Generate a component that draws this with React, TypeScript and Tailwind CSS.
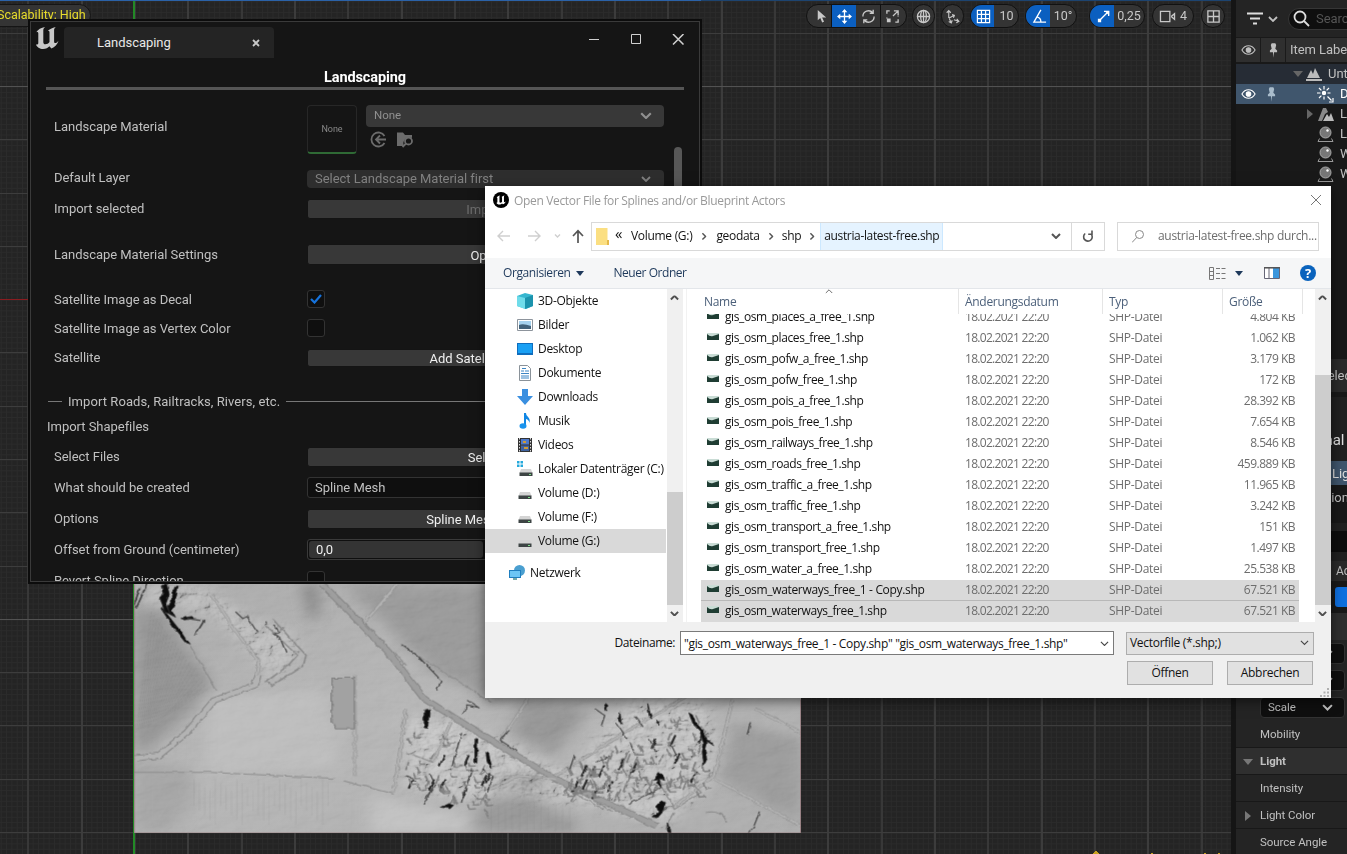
import React from "react";

type Kids = { children?: React.ReactNode };

/* ---------- shared glyphs ---------- */

function Chevron({ w = 12, className = "", sw = 1.8 }: { w?: number; className?: string; sw?: number }) {
  return (
    <svg width={w} height={w * 0.6} viewBox="0 0 10 6" fill="none" stroke="currentColor" strokeWidth={sw} className={`shrink-0 ${className}`}>
      <path d="M1 1l4 4 4-4" />
    </svg>
  );
}

function UnrealMark({ size, color }: { size: number; color: string }) {
  return (
    <svg width={size} height={size} viewBox="0 0 24 24" fill={color}>
      <path d="M1 6.5C3 3.400 6 1.500 10.200.9 8.800 1.900 8.300 2.700 8.300 4.200V16c0 1.500.8 2.300 2 2.300 1.700 0 3.200-1 4.200-2.300V6.300c0-1.200-.7-1.600-1.600-1.200C14.300 3.200 17 1.800 20.800.9c-1.200 1-1.700 1.900-1.700 3.300v11.300c0 1.200.5 1.600 1.200 1.600 1 0 2-.8 3.200-2.300-1 3.600-3.700 6.400-7.100 7.600l-2-2.200C13 21.700 11 23 8 23c-3 0-6.300-2.200-7-4.600 1.500.3 2.300-.2 2.300-1.400V7.600C3.300 6 2.300 5.700 1 6.500z" />
    </svg>
  );
}

/* ---------- viewport ---------- */

function Grid() {
  return (
    <svg className="absolute inset-0" width="1231" height="854" shapeRendering="crispEdges">
      <defs>
        <pattern id="minor" width="5.33" height="5.33" x="134" y="33.3" patternUnits="userSpaceOnUse">
          <path d="M0 .5H6M.5 0V6" stroke="#2b2b2b" strokeWidth="1" fill="none" />
        </pattern>
      </defs>
      <rect width="1231" height="854" fill="#242424" />
      <rect width="1231" height="854" fill="url(#minor)" />
      {Array.from({ length: 23 }, (_, i) => (
        <rect key={i} x={Math.round(27.3 + i * 53.33)} y="0" width="1.600" height="854" fill={i % 2 ? "#3c3c3c" : "#383838"} />
      ))}
      {Array.from({ length: 16 }, (_, i) => (
        <rect key={i} x="0" y={Math.round(32.8 + i * 53.28)} width="1231" height="1" fill={i % 10 === 1 ? "#525252" : "#3d3d3d"} />
      ))}
      <rect x="0" y="299" width="485" height="1" fill="#8a1c20" />
      <rect x="133" y="0" width="2" height="854" fill="#228a26" />
      <rect x="0" y="0" width="701" height="1" fill="#2b62a8" />
      <rect x="701" y="0" width="530" height="1" fill="#1d4470" />
      <path d="M1093 854l3-4 3 4zM1151 853h2v1h-2zM1204 853h2v1h-2zM1218 853h2v1h-2z" fill="#c9a21f" />
    </svg>
  );
}

const DARK_MARKS = [
  "M104 27l6 30-8 30 10 30-12-6-6-24-4-14 8-20-4-26zM122 36l8 0-6 40-8 30 8 20-12-8-6-24 10-26z",
  "M92 96l16 26 26 44 20 40-8-4-24-40-30-60z",
  "M136 130l24-6 6 6-20 4z",
  "M680 404l12-4-4 58-8-2z",
  "M794 488l6 2-2 72-5 0z",
  "M818 530l6 2 8 46-10-14z",
  "M1272 412l8 6 6 20 14 22 8 22 20 28-14-12-4 24 4 24-8 22-4-40 4-26-10-36-14-20z",
  "M1206 590l8 10 4 14-12-6 2 28-8-14 4-10-12 2z",
  "M1210 676l10 4-4 20-16 26-8-4 12-14-4-16z",
  "M1224 740l6 30h-6z",
  "M1086 384l5 6-3 16-4-8zM1118 408l3 38-6-14zM1180 384l9 46-6-10zM1200 430l5 8-2 12z",
  "M738 684l8 4-8 10-20-4zM772 656l4-16-14 38z",
];

const THIN_MARKS = [
  "M258 110l16 20 10-6 22 46M324 150l6-8M345 150l10 18-12 8 16 16 12 40",
  "M632 208l34 34 54 76-12 24M766 418l12-30 22 8M776 374l30 26M742 572l22-100M764 680l22-98",
  "M850 494l40 34M850 494l18-30M1410 440l-8 36M1430 710l-14 46-12 14",
  "M1062 400l22 20-8 32M1110 440l24 50M1150 420l20 34M1184 490l14 38M1230 500l16 44M1140 500l10 30M1208 636l-70 50",
  "M1064 560l30-20M1016 540l-10 40M700 640l-20 46M694 596l10 30-20 40M640 600l20 14M810 580l24 20-10 50",
];

const ROADS = [
  "M452 27L600 230 680 370 800 470 975 610 1200 750",
  "M31 548L86 540 150 470 210 375 300 330 310 300",
  "M975 600L1130 470 1270 360M1370 372L1330 600 1240 690M1330 610L1523 750",
  "M620 27L548 140M912 372L850 494M1420 400L1523 470",
  "M206 60L260 170 310 260 304 310",
  "M525 300V600M612 650L640 400M700 560L740 440M975 610L890 600 830 640",
];

const noise = (n: number) => {
  const v = Math.sin(n * 12.9898) * 43758.5453;
  return v - Math.floor(v);
};

/* buildings and hedges: short strokes spread over the settled areas */
const HOUSES = Array.from({ length: 190 }, (_, i) => {
  const a = noise(i + 1);
  const b = noise(i + 301);
  const c = noise(i + 701);
  const east = i % 4 !== 0;
  const x = east ? 1000 + a * 310 : 640 + a * 190;
  const y = east ? 380 + (1 - a) * 190 + b * (90 + a * 180) : 440 + a * 80 + b * 190;
  const slant = c > 0.6 ? -14 : 10;
  return { d: `M${x} ${y}l${slant * c + 2} ${8 + c * 26}l${c < 0.4 ? 14 : 2} ${-6 * c}`, dark: c > 0.86 };
});

function Terrain() {
  return (
    <svg className="absolute left-[134px] top-[584px]" width="667" height="249" viewBox="31 27 1492 744" preserveAspectRatio="none">
      <defs>
        <linearGradient id="tb" x1="0" y1="0" x2="1" y2="1">
          <stop offset="0" stopColor="#a2a2a2" />
          <stop offset=".45" stopColor="#aeaeae" />
          <stop offset="1" stopColor="#a4a4a4" />
        </linearGradient>
        <filter id="fine" x="0" y="0" width="100%" height="100%">
          <feTurbulence type="fractalNoise" baseFrequency=".012 .02" numOctaves="5" seed="7" />
          <feDiffuseLighting lightingColor="#fff" surfaceScale="7" diffuseConstant="1">
            <feDistantLight azimuth="215" elevation="45" />
          </feDiffuseLighting>
        </filter>
        <filter id="rough" x="0" y="0" width="100%" height="100%">
          <feTurbulence type="fractalNoise" baseFrequency=".025 .035" numOctaves="5" seed="21" />
          <feDiffuseLighting lightingColor="#fff" surfaceScale="14" diffuseConstant=".9">
            <feDistantLight azimuth="215" elevation="42" />
          </feDiffuseLighting>
        </filter>
        <filter id="jag" x="-5%" y="-5%" width="110%" height="110%">
          <feTurbulence type="fractalNoise" baseFrequency=".05" numOctaves="3" seed="3" />
          <feDisplacementMap in="SourceGraphic" scale="9" xChannelSelector="R" yChannelSelector="G" />
          <feGaussianBlur stdDeviation="1" />
        </filter>
        <filter id="soft" x="-30%" y="-30%" width="160%" height="160%">
          <feGaussianBlur stdDeviation="18" />
        </filter>
        <mask id="village">
          <g filter="url(#soft)" fill="#fff">
            <path d="M640 420L760 440 1000 590 1090 450 1150 372H1300L1340 500 1310 640 1220 750 1060 690 830 650 800 680 640 640z" />
            <path d="M31 27H190L300 140 370 150 410 230 340 320 270 200 180 110 90 90 31 70z" opacity=".8" />
          </g>
        </mask>
      </defs>
      <rect x="31" y="27" width="1492" height="744" fill="url(#tb)" />
      <g filter="url(#soft)">
        <path d="M31 110L90 100 210 330 140 430 60 530 31 530z" fill="#8a8a8a" />
        <path d="M500 27H830V372L700 290z" fill="#909090" />
        <path d="M410 27h30v100l-14 10z" fill="#6a6a6a" />
        <path d="M350 440q60-40 90 0-20 90-60 90z" fill="#9a9a9a" />
        <path d="M900 380l150 20-80 140-100-70z" fill="#8c8c8c" />
        <path d="M800 690l100-40 130 100-10 21H790z" fill="#8e8e8e" />
        <path d="M1370 440l153 50v250l-180-130z" fill="#929292" />
        <path d="M190 360l270-20 30 240-300 10z" fill="#b6b6b6" />
        <path d="M560 660l220 60v51H560z" fill="#bbb" />
        <path d="M840 590l130 10-20 50-100-10z" fill="#858585" />
        <path d="M31 556l120 20 20 80-60 115H31z" fill="#9c9c9c" />
      </g>
      <rect x="31" y="27" width="1492" height="744" filter="url(#fine)" opacity=".35" style={{ mixBlendMode: "soft-light" }} />
      <g mask="url(#village)" opacity=".34" style={{ mixBlendMode: "hard-light" }}>
        <rect x="31" y="27" width="1492" height="744" filter="url(#rough)" />
      </g>
      <g stroke="#868686" strokeWidth="2" opacity=".4">
        {Array.from({ length: 22 }, (_, i) => (
          <path key={i} d={`M${70 + i * 6} ${110 + i * 11}L${36 + i * 4} ${470 - i * 3}`} strokeDasharray="7 5" />
        ))}
        {Array.from({ length: 26 }, (_, i) => (
          <path key={i} d={`M${165 + i * 12} ${610 + (i % 4) * 12}V${690 + (i % 5) * 14}`} opacity=".5" />
        ))}
        {Array.from({ length: 12 }, (_, i) => (
          <path key={i} d={`M${830 + i * 16} ${680 + (i % 3) * 6}V765`} opacity=".5" />
        ))}
      </g>
      <g fill="none" filter="url(#jag)">
        {ROADS.map((d, i) => (
          <path key={i} d={d} stroke={i < 2 ? "#868686" : "#919191"} strokeWidth={i < 2 ? 18 : 8} />
        ))}
        {ROADS.map((d, i) => (
          <path key={i} d={d} stroke={i === 0 ? "#9e9e9e" : "#b3b3b3"} strokeWidth={i < 2 ? 13 : 5} />
        ))}
        <path d="M474 308H524V460H482L474 440z" fill="#a2a2a2" stroke="#808080" strokeWidth="3" />
        <path d="M340 130l76 110-6 30-70 60-14-10 50-50 20-30-70-90" stroke="#8a8a8a" strokeWidth="4" />
        <path d="M154 206L216 345M630 210L830 380M614 232L640 270M31 590L200 590 480 608M612 655L500 615M640 530L700 560" stroke="#8e8e8e" strokeWidth="3" />
        <path d="M1210 630l50-30 40 50-60 50zM1040 660l60 46M1000 640l80 60M1310 710q40-10 46 30M1240 710l-20 50" stroke="#8a8a8a" strokeWidth="3" />
        {HOUSES.map((h, i) => (
          <path key={i} d={h.d} stroke={h.dark ? "#2c2c2c" : "#7f7f7f"} strokeWidth={h.dark ? 5 : 4} />
        ))}
      </g>
      <g filter="url(#jag)">
        {DARK_MARKS.map((d, i) => (
          <path key={i} d={d} fill="#101010" stroke="#222" strokeWidth="2" />
        ))}
        {THIN_MARKS.map((d, i) => (
          <path key={i} d={d} fill="none" stroke="#484848" strokeWidth="3" />
        ))}
        <path d="M31 90L44 40M36 100L60 27M150 130l30 6M168 180l20-44" stroke="#444" strokeWidth="4" fill="none" />
      </g>
      <path d="M31 27V771H1523V372" fill="none" stroke="#8d6468" strokeWidth="2.500" />
    </svg>
  );
}

function Pill({ className = "", children }: Kids & { className?: string }) {
  return (
    <div className={`flex h-6 shrink-0 items-center overflow-hidden rounded-full border border-[#111] bg-[#343434] text-[#c8c8c8] ${className}`}>
      {children}
    </div>
  );
}

function Cell({ active, className = "", children }: Kids & { active?: boolean; className?: string }) {
  return (
    <div className={`flex h-full shrink-0 items-center justify-center ${active ? "bg-[#0b5fc0] text-white" : ""} ${className}`}>{children}</div>
  );
}

function ViewportToolbar() {
  const s = { width: 15, height: 15, viewBox: "0 0 16 16", fill: "none", stroke: "currentColor", strokeWidth: 1.4 };
  return (
    <div className="absolute left-[806px] top-[4px] flex items-center text-[12.500px]">
      <Pill className="w-[101px]">
        <Cell className="w-[25px] border-r border-[#111] pl-1">
          <svg {...s}>
            <path d="M4 1v11l2.700-2.500 2 5 2-1-2-4.500H13z" fill="currentColor" stroke="none" />
          </svg>
        </Cell>
        <Cell active className="w-6">
          <svg {...s}>
            <path d="M8 1.500v13M1.500 8h13" />
            <path d="M8 0l3 3.500H5zM8 16l3-3.500H5zM0 8l3.500-3v6zM16 8l-3.500-3v6z" fill="currentColor" stroke="none" />
          </svg>
        </Cell>
        <Cell className="w-[25px] border-r border-[#111]">
          <svg {...s}>
            <path d="M2 8a6 6 0 0 1 10.500-4M14 8A6 6 0 0 1 3.500 12M13 .8V4.500H9.300M3 15.200V11.500h3.700" />
          </svg>
        </Cell>
        <Cell className="w-[23px]">
          <svg {...s}>
            <path d="M2 5V2h3M2 9v1M14 7v1M11 14h3v-3M8.500 7.500L13.500 2.500M9.500 2H14v4.500" />
            <path d="M2 10h4v4H2z" fill="currentColor" stroke="none" />
          </svg>
        </Cell>
      </Pill>
      <Pill className="ml-[5px] w-[23px] justify-center">
        <svg {...s}>
          <circle cx="8" cy="8" r="6.500" />
          <ellipse cx="8" cy="8" rx="3" ry="6.500" />
          <path d="M1.500 8h13M8 1.500v13" />
        </svg>
      </Pill>
      <Pill className="ml-[6px] w-[23px] justify-center">
        <svg {...s} strokeWidth={1.2}>
          <path d="M4 9.500V2M1.800 4L4 1.600 6.200 4M4.500 9.500l5-2.500M7.500 6l2.500.8L9 9.300M4.500 10l2 4.500M4 13.300l2.700 1.500 1-2.800M9.500 11.500l5 1.500M12.500 10.500l2.300 2.600-2.800 1.700" />
        </svg>
      </Pill>
      <Pill className="ml-[6px] w-[49px]">
        <Cell active className="w-[23px] pl-0.5">
          <svg {...s} strokeWidth={1.3}>
            <path d="M1.500 1.500h13v13h-13zM5.800 1.500v13M10.200 1.500v13M1.500 5.800h13M1.500 10.200h13" />
          </svg>
        </Cell>
        <Cell className="w-[25px]">10</Cell>
      </Pill>
      <Pill className="ml-[6px] w-[52px]">
        <Cell active className="w-[24px] pl-0.5">
          <svg {...s}>
            <path d="M9.500 1L2 14h13M5 8.500c3 .5 4.500 2.500 4.500 5.500" />
          </svg>
        </Cell>
        <Cell className="w-[26px]">10°</Cell>
      </Pill>
      <Pill className="ml-[12px] w-[56px]">
        <Cell active className="w-[24px] pl-0.5">
          <svg {...s}>
            <path d="M5 11l8-8M8.500 2.500h5v5" />
            <path d="M2 10.500h3.500V14H2z" fill="currentColor" stroke="none" />
            <path d="M9 2h5v5z" fill="currentColor" stroke="none" />
          </svg>
        </Cell>
        <Cell className="w-[30px]">0,25</Cell>
      </Pill>
      <Pill className="ml-[7px] w-[42px] gap-1 pl-[6px]">
        <svg {...s} width="17">
          <path d="M.5 2.500h10v11H.5zM12.500 7.500l3-2.500v6l-3-2.500z" />
        </svg>
        4
      </Pill>
      <Pill className="ml-[7px] w-[24px] justify-center">
        <svg {...s}>
          <path d="M2 2h12v12H2zM8 2v12M2 8h12" />
        </svg>
      </Pill>
    </div>
  );
}

/* ---------- right hand panels ---------- */

function Eye() {
  return (
    <svg className="shrink-0" width="15" height="12" viewBox="0 0 16 12" fill="none" stroke="currentColor" strokeWidth="1.200">
      <path d="M1 6c3.500-6 10.500-6 14 0-3.500 6-10.500 6-14 0z" />
      <circle cx="8" cy="6" r="2.400" fill="currentColor" />
    </svg>
  );
}

function Pin() {
  return (
    <svg className="shrink-0" width="9" height="15" viewBox="0 0 10 16" fill="currentColor">
      <path d="M3 0h4l1 2-1 4 2 2v2H5.600L5 16l-.6-6H1V8l2-2-1-4z" />
    </svg>
  );
}

function Sphere() {
  return (
    <svg className="shrink-0" width="17" height="17" viewBox="0 0 16 17" fill="none">
      <circle cx="8" cy="6.500" r="5.500" fill="#777" stroke="#aaa" />
      <circle cx="10" cy="4.500" r="1.200" fill="#fff" />
      <path d="M2 12.500L.5 15.500h15L14 12.500" stroke="#999" />
    </svg>
  );
}

function OutlinerRow({ indent, icon, label, className = "", marks }: { indent: string; icon: React.ReactNode; label: string; className?: string; marks?: boolean }) {
  return (
    <div className={`flex h-5 shrink-0 items-center whitespace-nowrap ${className}`}>
      <div className={`flex shrink-0 items-center gap-[11px] pl-[5px] ${indent}`}>
        {marks && (
          <>
            <Eye />
            <span className="text-[#a9bccb]"><Pin /></span>
          </>
        )}
      </div>
      {icon}
      <span className="-mt-px ml-[6px] shrink-0">{label}</span>
    </div>
  );
}

function DetailRow({ label, arrow, head }: { label: string; arrow?: "down" | "right"; head?: boolean }) {
  return (
    <div className={`flex h-[27px] shrink-0 items-center whitespace-nowrap border-b border-[#181818] pt-px text-[11.500px] ${head ? "bg-[#2f2f2f] font-bold" : "bg-[#242424]"}`}>
      <span className="flex w-6 justify-center text-[#777]">
        {arrow === "down" && <svg width="10" height="6" viewBox="0 0 10 6" fill="currentColor"><path d="M0 0h10L5 6z" /></svg>}
        {arrow === "right" && <svg width="6" height="10" viewBox="0 0 6 10" fill="currentColor"><path d="M0 0v10l6-5z" /></svg>}
      </span>
      {label}
    </div>
  );
}

function Combo({ label }: { label?: string }) {
  return (
    <div className="mb-[6px] ml-[24px] flex h-[21px] w-[85px] shrink-0 items-center rounded border border-[#333] bg-[#0f0f0f] pl-[7px] pr-[11px] text-[11.500px]">
      {label}
      <Chevron w={11} className="ml-auto" />
    </div>
  );
}

function RightPanel() {
  return (
    <div className="flex w-[116px] shrink-0 flex-col overflow-hidden border-l-[5px] border-[#151515] bg-[#191919] text-[13px] tracking-[-0.05px] text-[#c0c0c0]">
      <div className="flex h-[37px] shrink-0 items-center bg-[#242424] pl-[11px]">
        <svg className="shrink-0" width="16" height="13" viewBox="0 0 16 13" stroke="#ddd" strokeWidth="2"><path d="M0 1.500h16M3 6.500h10M6 11.500h4" /></svg>
        <Chevron w={10} className="ml-[5px]" />
        <div className="ml-[10px] flex h-[22px] w-[80px] shrink-0 items-center rounded-full border border-[#363636] bg-[#0f0f0f] pl-[4px] text-[#555]">
          <svg className="shrink-0" width="17" height="17" viewBox="0 0 17 17" fill="none" stroke="#ddd" strokeWidth="1.800"><circle cx="7" cy="7" r="5.500" /><path d="M11 11l5 5" /></svg>
          <span className="-mt-px ml-[6px]">Search...</span>
        </div>
      </div>
      <div className="mb-[2px] mt-px flex h-[24px] shrink-0 items-center whitespace-nowrap bg-[#2f2f2f]">
        <span className="flex h-full w-[25px] shrink-0 items-center justify-center border-r border-[#1a1a1a]"><Eye /></span>
        <span className="flex h-full w-[25px] shrink-0 items-center justify-center border-r border-[#1a1a1a]"><Pin /></span>
        <span className="-mt-px pl-[4px]">Item Label</span>
      </div>
      <OutlinerRow
        indent="w-[57px]" className="bg-[#262c35]" label="Untitled"
        icon={
          <svg className="shrink-0" width="29" height="14" viewBox="0 0 29 14" fill="#bbb">
            <path d="M0 4h10L5 10z" fill="#666" />
            <path d="M14 11l4-8 2 4 2-6 5 10zM13 12h16v2H13z" />
          </svg>
        }
      />
      <OutlinerRow
        indent="w-[81px]" marks className="bg-[#40566d] text-white" label="DirectionalLight"
        icon={
          <svg className="shrink-0" width="17" height="17" viewBox="0 0 17 17" stroke="#fff" strokeWidth="1.200" fill="#fff">
            <circle cx="7" cy="7" r="1.600" />
            <path d="M7 0v3.500M7 10.500v3M0 7h3.500M10.500 7h3M2 2l2.400 2.400M12 2L9.600 4.400M2 12l2.400-2.400" />
            <path d="M10.500 10.500l4 4M16 12v4h-4" fill="none" />
          </svg>
        }
      />
      <OutlinerRow
        indent="w-[71px]" label="Landscape"
        icon={
          <svg className="shrink-0" width="27" height="15" viewBox="0 0 27 15" fill="#bbb">
            <path d="M0 2v10l6-5z" fill="#666" />
            <path d="M11 14L16 1h3l2 4-3 2-3 7z" fill="#888" />
            <path d="M16 14l4-7 2 3 2-4 3 8z" />
          </svg>
        }
      />
      <OutlinerRow indent="w-[81px]" label="LandscapingInfo" icon={<Sphere />} />
      <OutlinerRow indent="w-[81px]" label="WorldDataLayers" icon={<Sphere />} />
      <OutlinerRow indent="w-[81px]" label="WorldPartition" icon={<Sphere />} />
      <div className="mt-[175px] flex h-[33px] shrink-0 items-center bg-[#2a2a2a] pl-[84px]">Selec</div>
      <div className="mt-[5px] flex h-[64px] shrink-0 items-end bg-[#212121] pb-[13px] pl-[80px] text-[15px] text-[#e0e0e0]">onal</div>
      <div className="flex h-[24px] shrink-0 items-center bg-[#40566d] pl-[96px] text-[#e0e0e0]">Lig</div>
      <div className="flex h-[24px] shrink-0 items-center pl-[91px]">tion</div>
      <div className="mt-[14px] h-[8px] shrink-0 bg-[#212121]" />
      <div className="h-[21px] shrink-0 bg-[#0d0d0d]" />
      <div className="h-[9px] shrink-0 bg-[#212121]" />
      <div className="flex h-[20px] shrink-0 items-center bg-[#2a2a2a] pl-[100px] text-[12px]">Ac</div>
      <div className="flex h-[32px] shrink-0 items-center bg-[#191919] pl-[99px]">
        <div className="h-[20px] w-[30px] shrink-0 rounded-[3px] bg-[#0f70e0]" />
      </div>
      <div className="h-[27px] shrink-0 bg-[#2f2f2f]" />
      <div className="flex h-[81px] shrink-0 flex-col bg-[#242424] pt-[3px]">
        <Combo />
        <Combo />
        <Combo label="Scale" />
      </div>
      <DetailRow label="Mobility" />
      <DetailRow label="Light" arrow="down" head />
      <DetailRow label="Intensity" />
      <DetailRow label="Light Color" arrow="right" />
      <DetailRow label="Source Angle" />
    </div>
  );
}

/* ---------- Landscaping window ---------- */

function Row({ label, h, children }: Kids & { label: string; h: string }) {
  return (
    <div className={`flex shrink-0 items-center ${h}`}>
      <div className="w-[253px] shrink-0 whitespace-nowrap">{label}</div>
      {children}
    </div>
  );
}

function Btn({ label, h, dim }: { label: string; h: string; dim?: boolean }) {
  return (
    <div className={`flex w-[357px] items-center justify-center rounded-[3px] border border-[#141414] bg-[#383838] pt-[2px] ${h} ${dim ? "text-[#6e6e6e]" : "text-[#f0f0f0]"}`}>
      {label}
    </div>
  );
}

function Check({ on }: { on?: boolean }) {
  return (
    <div className="-mt-px flex h-[18px] w-[18px] items-center justify-center rounded-[3px] border border-[#333] bg-[#0f0f0f]">
      {on && <svg width="12" height="10" viewBox="0 0 12 10" fill="none" stroke="#1673dc" strokeWidth="2.200"><path d="M1 5l3.500 3.500L11 1" /></svg>}
    </div>
  );
}

function LandscapingWindow() {
  return (
    <div className="absolute left-[28px] top-[19px] h-[565px] w-[674px] border-2 border-[#0c0c0c] bg-[#151515] text-[13px] tracking-[-0.03px] text-[#c0c0c0]">
      <div className="flex h-full flex-col border border-[#3a3a3a]">
        <div className="flex h-[36px] shrink-0 items-start">
          <div className="ml-[4px] mt-[4px]"><UnrealMark size={24} color="#c8c8c8" /></div>
          <div className="ml-[5px] mt-[5px] flex h-[31px] w-[210px] items-center justify-between rounded-t bg-[#242424] pl-[33px] pr-[14px] text-[#e8e8e8]">
            Landscaping
            <svg width="8" height="8" viewBox="0 0 8 8" stroke="#c8c8c8" strokeWidth="1.800"><path d="M1 1l6 6M7 1L1 7" /></svg>
          </div>
          <svg className="ml-[315px] mt-[12px]" width="96" height="11" viewBox="0 0 96 11" fill="none" stroke="#d0d0d0">
            <path d="M0 5.500h10" />
            <path d="M42.500.5h9v9h-9z" />
            <path d="M84 0l10.500 10.500M94.500 0L84 10.500" strokeWidth="1.500" />
          </svg>
        </div>
        <div className="flex h-[29px] shrink-0 items-end justify-center pb-[2px] text-[14.500px] font-bold tracking-[-0.1px] text-white">Landscaping</div>
        <div className="ml-[15px] h-[3px] w-[638px] shrink-0 bg-[#555]" />
        <div className="flex min-h-0 flex-1 overflow-hidden">
          <div className="flex w-[640px] shrink-0 flex-col pl-[23px]">
            <div className="flex h-[72px] shrink-0">
              <div className="flex w-[253px] shrink-0 items-center">Landscape Material</div>
              <div className="mt-[15px] flex h-[49px] w-[50px] items-center justify-center rounded-sm border border-b-2 border-[#272727] border-b-[#2f6a35] text-[9px] text-[#888]">None</div>
              <div className="ml-[9px] mt-[15px]">
                <div className="flex h-[22px] w-[298px] items-center justify-between rounded bg-[#383838] pb-px pl-[8px] pr-[12px] text-[11.500px] text-[#909090]">
                  None
                  <Chevron w={12} />
                </div>
                <svg className="ml-[4px] mt-[4px]" width="44" height="17" viewBox="0 0 44 17" fill="none" stroke="#6c6c6c" strokeWidth="1.800">
                  <path d="M14.500 5A7 7 0 1 0 14.500 12M16 8.500H6M10 4.500l-4 4 4 4" />
                  <path d="M27 1.500h6l2 2.500h7v3a6 6 0 0 0-8 8H27z" fill="#6c6c6c" stroke="none" />
                  <circle cx="38.500" cy="10" r="3.500" fill="#151515" />
                  <path d="M36 12.500L32.500 16" />
                </svg>
              </div>
            </div>
            <Row label="Default Layer" h="h-[31px]">
              <div className="mt-[2px] flex h-[18px] w-[357px] items-center justify-between rounded bg-[#2e2e2e] pl-[8px] pr-[13px] text-[#808080]">
                Select Landscape Material first
                <Chevron w={10} />
              </div>
            </Row>
            <Row label="Import selected" h="h-[31px]"><Btn label="Import" h="h-[20px]" dim /></Row>
            <div className="h-[15px] shrink-0" />
            <Row label="Landscape Material Settings" h="h-[30px]"><Btn label="Open" h="h-[21px]" /></Row>
            <div className="h-[16px] shrink-0" />
            <Row label="Satellite Image as Decal" h="h-[29px]"><Check on /></Row>
            <Row label="Satellite Image as Vertex Color" h="h-[29px]"><Check /></Row>
            <Row label="Satellite" h="h-[29px]"><Btn label="Add Satellite Image" h="h-[18px]" /></Row>
            <div className="h-[19px] shrink-0" />
            <div className="-ml-[6px] flex h-[20px] shrink-0 items-center gap-[6px] whitespace-nowrap">
              <div className="h-px w-[14px] bg-[#777]" />
              <span className="tracking-[0.07px]">Import Roads, Railtracks, Rivers, etc.</span>
              <div className="h-px flex-1 bg-[#777]" />
            </div>
            <div className="-ml-[7px] flex h-[30px] shrink-0 items-center">Import Shapefiles</div>
            <Row label="Select Files" h="h-[31px]"><Btn label="Select" h="h-[20px]" /></Row>
            <Row label="What should be created" h="h-[31px]">
              <div className="flex h-[21px] w-[357px] items-center rounded-[3px] border border-[#333] bg-[#0f0f0f] pl-[7px]">Spline Mesh</div>
            </Row>
            <Row label="Options" h="h-[31px]"><Btn label="Spline Mesh Options" h="h-[20px]" /></Row>
            <Row label="Offset from Ground (centimeter)" h="h-[31px]">
              <div className="flex h-[21px] w-[357px] items-center rounded-[3px] border border-[#3a3a3a] bg-[#0f0f0f] p-px">
                <div className="flex h-full w-[174px] items-center rounded-[3px] bg-[#343434] pl-[7px] text-[#f0f0f0]">0,0</div>
              </div>
            </Row>
            <Row label="Revert Spline Direction" h="h-[31px]"><Check /></Row>
          </div>
          <div className="ml-[3px] mt-[57px] h-[180px] w-[8px] rounded-full bg-[#575757]" />
        </div>
      </div>
    </div>
  );
}

/* ---------- file dialog ---------- */

const FILES: [string, string][] = [
  ["gis_osm_places_a_free_1.shp", "4.804 KB"],
  ["gis_osm_places_free_1.shp", "1.062 KB"],
  ["gis_osm_pofw_a_free_1.shp", "3.179 KB"],
  ["gis_osm_pofw_free_1.shp", "172 KB"],
  ["gis_osm_pois_a_free_1.shp", "28.392 KB"],
  ["gis_osm_pois_free_1.shp", "7.654 KB"],
  ["gis_osm_railways_free_1.shp", "8.546 KB"],
  ["gis_osm_roads_free_1.shp", "459.889 KB"],
  ["gis_osm_traffic_a_free_1.shp", "11.965 KB"],
  ["gis_osm_traffic_free_1.shp", "3.242 KB"],
  ["gis_osm_transport_a_free_1.shp", "151 KB"],
  ["gis_osm_transport_free_1.shp", "1.497 KB"],
  ["gis_osm_water_a_free_1.shp", "25.538 KB"],
  ["gis_osm_waterways_free_1 - Copy.shp", "67.521 KB"],
  ["gis_osm_waterways_free_1.shp", "67.521 KB"],
];

const drive = (
  <>
    <path d="M3 7h10l1.500 4h-13z" fill="#d4d4d4" />
    <path d="M1.500 10.500h13v3.500h-13z" fill="#3d4444" />
    <path d="M11 12h2v1h-2z" fill="#7fe08a" />
  </>
);

const PLACES: [string, React.ReactNode][] = [
  ["3D-Objekte", <><path d="M0 3l8-3 8 2v11l-7 3-9-3z" fill="#35b6cf" /><path d="M0 3l8 2v11l-8-3z" fill="#6fdcea" /><path d="M8 5l8-3v11l-8 3z" fill="#1b93ad" /></>],
  ["Bilder", <><path d="M.5 2.500h15v11H.5z" fill="#fff" stroke="#8d949c" /><path d="M2 4h12v8H2z" fill="#a6d2ee" /><path d="M2 8q4-2 12 1v3H2z" fill="#42627a" /></>],
  ["Desktop", <><path d="M0 2h16v12H0z" fill="#0f6dbd" /><path d="M1 3h14v9H1z" fill="#19a0f4" /></>],
  ["Dokumente", <><path d="M2.500.5h8l3 3v12h-11z" fill="#fff" stroke="#8a9299" /><path d="M4 6h3M8 6h4M4 8.500h8M4 11h8M4 13h8M5 3.500h4" stroke="#3c86c4" /></>],
  ["Downloads", <path d="M5 0h6v7h5l-8 9-8-9h5z" fill="#3a8fe0" />],
  ["Musik", <><path d="M7 0h2c0 4 5 4 3.500 10-.3-2-1.500-3.500-3.500-4v7H7z" fill="#0f86e4" /><ellipse cx="6" cy="13" rx="3.500" ry="2.800" fill="#1a94ee" /></>],
  ["Videos", <><path d="M1 1h14v14H1z" fill="#333" /><path d="M4 2h8v5.500H4z" fill="#4f79c8" /><path d="M4 8.500h8V14H4z" fill="#40639f" /><path d="M6 4h3v2H6zM7 10h4v2H7z" fill="#d09a35" /><path d="M2.500 1v14M13.500 1v14" stroke="#ddd" strokeDasharray="1.500 1.500" /></>],
  ["Lokaler Datenträger (C:)", <><g transform="translate(1 1)">{drive}</g><path d="M0 0h2.500v2.500H0zM3.500 0H6v2.500H3.500zM0 3.500h2.500V6H0zM3.500 3.500H6V6H3.500z" fill="#25a9dc" /></>],
  ["Volume (D:)", drive],
  ["Volume (F:)", drive],
  ["Volume (G:)", drive],
];

function ScrollColumn({ thumb }: { thumb: string }) {
  return (
    <div className="flex w-[16px] shrink-0 flex-col bg-[#f0f0f0] text-[#505050]">
      <div className="flex h-[17px] items-center justify-center pr-px"><Chevron w={9} sw={2.200} className="rotate-180" /></div>
      <div className={`w-full bg-[#cdcdcd] ${thumb}`} />
      <div className="flex h-[17px] items-center justify-center pr-px"><Chevron w={9} sw={2.200} /></div>
    </div>
  );
}

function FileDialog() {
  return (
    <div className="absolute left-[485px] top-[186px] flex h-[512px] w-[846px] flex-col whitespace-nowrap bg-white font-['Open_Sans','Noto_Sans',sans-serif] text-[12px] tracking-[-0.3px] text-[#111] shadow-[0_3px_12px_rgba(0,0,0,0.55)]">
      <div className="flex h-[35px] shrink-0 items-start pl-[8px] pr-[9px] pt-[6px]">
        <div className="flex h-4 w-4 items-center justify-center rounded-full bg-black"><UnrealMark size={10} color="#fff" /></div>
        <span className="ml-[5px] mt-[3px] tracking-[-0.34px] text-[#999]">Open Vector File for Splines and/or Blueprint Actors</span>
        <svg className="ml-auto mt-[2px]" width="12" height="12" viewBox="0 0 12 12" stroke="#777"><path d="M1 1l10 10M11 1L1 11" /></svg>
      </div>
      <div className="flex h-[30px] shrink-0 items-center">
        <svg className="ml-[12px] shrink-0" width="88" height="14" viewBox="0 0 88 14" fill="none" stroke="#cfcfcf" strokeWidth="1.400">
          <path d="M13 7H1M6 2L1 7l5 5M31 7h12M38 2l5 5-5 5" />
          <path d="M58 5.500l2.500 2.500L63 5.500" />
          <path d="M81 14V2M76 7l5-5.300L86 7" stroke="#555" strokeWidth="1.700" />
        </svg>
        <div className="ml-[6px] flex h-[29px] w-[514px] shrink-0 items-center border border-[#d9d9d9]">
          <svg className="ml-[4px] mr-[6px] shrink-0" width="13" height="17" viewBox="0 0 13 17"><path d="M0 0h11.500v12H13v5H0z" fill="#fbdf82" /><path d="M11 12h2v5h-2z" fill="#e5b94b" /></svg>
          <span className="-mt-[5px] w-[16px] shrink-0 text-[15px]">«</span>
          Volume (G:)
          <Chevron w={8} className="mx-[8px] -rotate-90 text-[#555]" />
          geodata
          <Chevron w={8} className="ml-[7px] mr-[7px] -rotate-90 text-[#555]" />
          shp
          <Chevron w={8} className="ml-[7px] mr-[4px] -rotate-90 text-[#555]" />
          <div className="flex h-full w-[123px] shrink-0 items-center justify-center border border-y-0 border-[#cce8ff] bg-[#e5f3ff] tracking-[-0.35px]">austria-latest-free.shp</div>
          <Chevron w={10} sw={2} className="ml-auto mr-[10px] text-[#555]" />
          <div className="flex h-full w-[33px] shrink-0 items-center justify-center border-l border-[#d9d9d9]">
            <svg width="12" height="13" viewBox="0 0 12 13" fill="none" stroke="#555" strokeWidth="1.600"><path d="M3.200 3.500A4.300 4.300 0 1 0 9 3.800M10 .5V4.300H6.200" /></svg>
          </div>
        </div>
        <div className="ml-[12px] flex h-[29px] w-[202px] shrink-0 items-center border border-[#d9d9d9] text-[#6d6d6d]">
          <svg className="ml-[14px] mr-[14px] shrink-0" width="12" height="13" viewBox="0 0 12 13" fill="none" stroke="#888"><circle cx="7.500" cy="4.500" r="4" /><path d="M4.700 7.500L0 12.500" /></svg>
          austria-latest-free.shp durch...
        </div>
      </div>
      <div className="mt-[7px] flex h-[31px] shrink-0 items-center border-b border-[#e3e6ea] bg-[#f5f6f7] pl-[18px] text-[#1e395b]">
        <span className="tracking-[-0.4px]">Organisieren</span>
        <svg className="ml-[5px] mt-px" width="8" height="5" viewBox="0 0 8 5" fill="#1e395b"><path d="M0 0h8L4 5z" /></svg>
        <span className="ml-[30px] tracking-[-0.45px]">Neuer Ordner</span>
        <svg className="ml-auto" width="34" height="13" viewBox="0 0 34 13" fill="none" stroke="#777">
          <path d="M.5.5h4v12h-4zM.5 4.500h4M.5 8.500h4M7 1.500h4M12.500 1.500h4M7 6.500h4M12.500 6.500h4M7 11.500h4M12.500 11.500h4" />
          <path d="M26 4h8l-4 5z" fill="#1e395b" stroke="none" />
        </svg>
        <svg className="ml-[21px]" width="16" height="12" viewBox="0 0 16 12"><path d="M.5.5h15v11H.5zM5 1v10" fill="#fff" stroke="#667" /><path d="M9 1h6v10H9z" fill="#3a96dd" /><path d="M0 .8h16" stroke="#555" strokeWidth="1.500" /></svg>
        <div className="ml-[20px] mr-[15px] flex h-4 w-4 items-center justify-center rounded-full bg-[#0a63bd] text-[13px] font-bold text-white">?</div>
      </div>
      <div className="flex h-[333px] shrink-0">
        <div className="flex w-[182px] shrink-0 flex-col">
          {PLACES.map(([name, icon]) => (
            <div key={name} className={`mr-px flex h-6 shrink-0 items-center pl-[32px] ${name === "Volume (G:)" ? "bg-[#d9d9d9]" : ""}`}>
              <svg width="16" height="16" viewBox="0 0 16 16" className="mr-[5px] shrink-0">{icon}</svg>
              {name}
            </div>
          ))}
          <div className="mt-[8px] flex h-6 items-center pl-[24px]">
            <svg width="16" height="16" viewBox="0 0 16 16" className="mr-[5px]">
              <circle cx="10.500" cy="5.500" r="5.500" fill="#4a9fd0" />
              <path d="M0 5h12v8H0z" fill="#1f7fc0" />
              <path d="M1 6h10v6H1z" fill="#6cc6f5" />
              <path d="M4 13h4v2H4z" fill="#7aa" />
            </svg>
            Netzwerk
          </div>
        </div>
        <ScrollColumn thumb="mt-[186px] h-[113px]" />
        <div className="ml-[3px] mr-[12px] flex flex-1 flex-col border-l border-[#f2f2f2] pl-[14px]">
          <div className="flex h-[25px] shrink-0 items-center text-[#4c607a]">
            <div className="relative flex h-full w-[258px] items-center border-r border-[#e5e5e5] pl-[3px]">
              Name
              <Chevron w={8} sw={1.200} className="absolute left-[124px] top-0 rotate-180 text-[#666]" />
            </div>
            <div className="flex h-full w-[144px] items-center border-r border-[#e5e5e5] pl-[6px]">Änderungsdatum</div>
            <div className="flex h-full w-[120px] items-center border-r border-[#e5e5e5] pl-[6px]">Typ</div>
            <div className="flex h-full w-[80px] items-center border-r border-[#e5e5e5] pl-[6px]">Größe</div>
          </div>
          <div className="flex h-[308px] flex-col justify-end overflow-hidden">
            {FILES.map(([name, size], i) => (
              <div key={name} className={`flex h-[21px] w-[598px] shrink-0 items-center border-b pl-[6px] text-[#6d6d6d] ${i > 12 ? "bg-[#d9d9d9]" : ""} ${i === 13 ? "border-[#b8b8b8]" : "border-transparent"}`}>
                <svg width="12" height="7" viewBox="0 0 12 7" className="mr-[6px] mt-[-3px]">
                  <path d="M0 0h12v7H0z" fill="#c9dcd5" />
                  <path d="M0 1q3 3 6 2t6-2v6H0z" fill="#1f3d33" />
                </svg>
                <span className={`w-[240px] text-[#111] ${i === 13 ? "tracking-[-0.33px]" : "tracking-[-0.4px]"}`}>{name}</span>
                <span className="w-[144px] tracking-[-0.7px]">18.02.2021 22:20</span>
                <span className="w-[100px]">SHP-Datei</span>
                <span className="flex-1 pr-[4px] text-right tracking-[-0.5px]">{size}</span>
              </div>
            ))}
          </div>
        </div>
        <ScrollColumn thumb="mt-[69px] h-[230px]" />
      </div>
      <div className="flex flex-1 flex-col bg-[#f0f0f0] pt-[9px]">
        <div className="flex h-[24px] items-center">
          <span className="w-[190px] text-right tracking-[-0.4px]">Dateiname:</span>
          <div className="ml-[5px] flex h-[24px] w-[434px] items-center justify-between border border-[#7a7a7a] bg-white pl-[3px] pr-[4px] pt-px tracking-[-0.33px]">
            "gis_osm_waterways_free_1 - Copy.shp" "gis_osm_waterways_free_1.shp"
            <Chevron w={9} sw={1.200} className="text-[#444]" />
          </div>
          <div className="ml-[12px] flex h-[23px] w-[188px] items-center justify-between border border-[#adadad] bg-[#e1e1e1] pl-[3px] pr-[4px]">
            Vectorfile (*.shp;)
            <Chevron w={9} sw={1.200} className="text-[#444]" />
          </div>
        </div>
        <div className="mt-[6px] flex items-start">
          <div className="ml-[642px] flex h-[24px] w-[86px] items-center justify-center border border-[#adadad] bg-[#e1e1e1]">Öffnen</div>
          <div className="ml-[14px] flex h-[24px] w-[86px] items-center justify-center border border-[#adadad] bg-[#e1e1e1]">Abbrechen</div>
          <svg className="ml-[7px] mt-[27px]" width="9" height="9" viewBox="0 0 9 9" fill="#b0b0b0"><path d="M7 0h2v2H7zM7 3.500h2v2H7zM3.500 3.500h2v2h-2zM7 7h2v2H7zM3.500 7h2v2h-2zM0 7h2v2H0z" /></svg>
        </div>
      </div>
    </div>
  );
}

export default function App() {
  return (
    <div className="relative flex h-[854px] w-[1347px] overflow-hidden bg-[#151515] font-['Roboto',sans-serif] leading-none">
      <div className="relative w-[1231px] shrink-0 overflow-hidden">
        <Grid />
        <Terrain />
        <div className="absolute -left-[12px] top-[4px] flex h-[23px] w-[103px] items-center rounded-full border border-[#151515] bg-[#343434] pl-[8px] text-[12.500px] whitespace-nowrap text-[#e8dc2c]">Scalability: High</div>
        <ViewportToolbar />
      </div>
      <RightPanel />
      <LandscapingWindow />
      <FileDialog />
    </div>
  );
}
